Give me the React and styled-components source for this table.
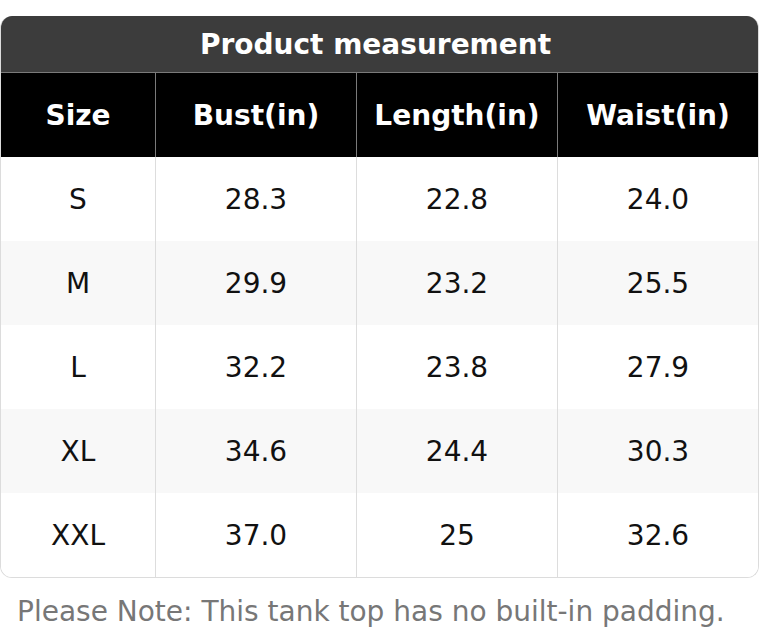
import React from "react";
import styled, { createGlobalStyle } from "styled-components";

const Global = createGlobalStyle`
  html, body { margin: 0; padding: 0; background: #fff; }
  body { font-family: "DejaVu Sans", "Liberation Sans", sans-serif; }
`;

const Page = styled.div`
  padding: 16px 1px 0 0;
  width: 760px;
  box-sizing: border-box;
`;

const Card = styled.div`
  border: 1px solid #dcdcdc;
  border-top: none;
  border-radius: 12px;
  overflow: hidden;
  background: #fff;
`;

const Title = styled.div`
  background: #3c3c3c;
  color: #fff;
  font-weight: bold;
  font-size: 28px;
  height: 56px;
  padding-right: 8px;
  display: flex;
  align-items: center;
  justify-content: center;
  border-bottom: 1px solid #7a7a7a;
`;

const Row = styled.div`
  display: grid;
  grid-template-columns: 154px 201px 201px 1fr;
  height: 84px;
  background: ${(p) => (p.$head ? "#000" : p.$alt ? "#f8f8f8" : "#fff")};
  color: ${(p) => (p.$head ? "#fff" : "#111")};
  font-weight: ${(p) => (p.$head ? "bold" : "normal")};
`;

const Cell = styled.div`
  display: flex;
  align-items: center;
  justify-content: center;
  font-size: 28px;
  border-left: ${(p) => (p.$first ? "none" : `1px solid ${p.$head ? "#7a7a7a" : "#dddddd"}`)};
`;

const Note = styled.div`
  color: #777;
  font-size: 28px;
  padding: 17px 0 0 17px;
`;

const headers = ["Size", "Bust(in)", "Length(in)", "Waist(in)"];
const rows = [
  ["S", "28.3", "22.8", "24.0"],
  ["M", "29.9", "23.2", "25.5"],
  ["L", "32.2", "23.8", "27.9"],
  ["XL", "34.6", "24.4", "30.3"],
  ["XXL", "37.0", "25", "32.6"],
];

export default function App() {
  return (
    <Page>
      <Global />
      <Card>
        <Title>Product measurement</Title>
        <Row $head>
          {headers.map((h, i) => (
            <Cell key={h} $head $first={i === 0}>{h}</Cell>
          ))}
        </Row>
        {rows.map((r, ri) => (
          <Row key={r[0]} $alt={ri % 2 === 1}>
            {r.map((c, i) => (
              <Cell key={i} $first={i === 0}>{c}</Cell>
            ))}
          </Row>
        ))}
      </Card>
      <Note>Please Note: This tank top has no built-in padding.</Note>
    </Page>
  );
}
